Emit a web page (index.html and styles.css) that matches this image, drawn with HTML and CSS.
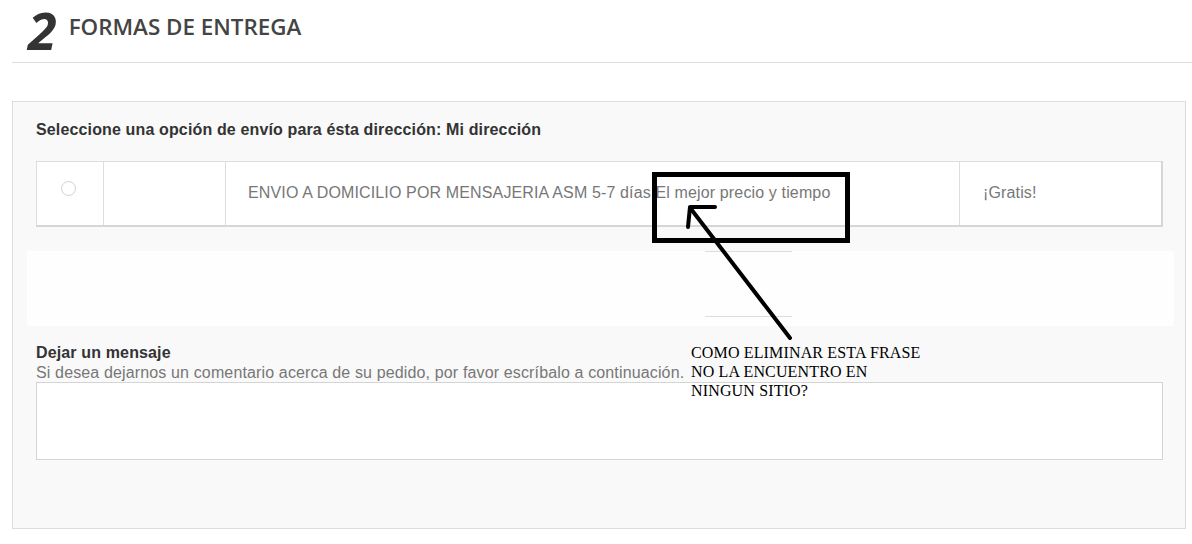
FILE: index.html
```html
<!DOCTYPE html>
<html lang="es">
<head>
    <meta charset="UTF-8">
    <meta name="viewport" content="width=device-width, initial-scale=1.0">
    <title>Formas de entrega</title>
    <link rel="stylesheet" href="styles.css">
</head>
<body>

    <div class="step-header">
        <span class="step-num">2</span>
        <h1 class="step-title">FORMAS DE ENTREGA</h1>
    </div>
    <hr class="step-rule">

    <div class="delivery-panel">
        <p class="delivery-label">Seleccione una opción de envío para ésta dirección: Mi dirección</p>

        <table class="carrier-table">
            <tr>
                <td class="col-radio"><span class="radio"></span></td>
                <td class="col-logo"></td>
                <td class="col-name">ENVIO A DOMICILIO POR MENSAJERIA ASM 5-7 días El mejor precio y tiempo</td>
                <td class="col-price">¡Gratis!</td>
            </tr>
        </table>

        <div class="extra-block">
            <div class="extra-line"></div>
        </div>

        <div class="message-box">
            <p class="message-title">Dejar un mensaje</p>
            <p class="message-hint">Si desea dejarnos un comentario acerca de su pedido, por favor escríbalo a continuación.</p>
            <textarea class="message-input"></textarea>
        </div>
    </div>

    <!-- anotacion encima de la captura -->
    <svg class="markup" width="1192" height="544" viewBox="0 0 1192 544">
        <rect x="654.5" y="174.5" width="193" height="66" fill="none" stroke="#000" stroke-width="5"/>
        <line x1="691" y1="209" x2="790" y2="338" stroke="#000" stroke-width="4" stroke-linecap="round"/>
        <polyline points="715,207 690,207 688,227" fill="none" stroke="#000" stroke-width="4" stroke-linecap="round" stroke-linejoin="round"/>
    </svg>
    <div class="markup-note">COMO ELIMINAR ESTA FRASE<br>NO LA ENCUENTRO EN<br>NINGUN SITIO?</div>

</body>
</html>
```

FILE: styles.css
```css
body {
    font-family: 'Liberation Sans', Arial, sans-serif;
    margin: 0;
    padding: 0;
    background-color: #fff;
    position: relative;
    width: 1192px;
    height: 544px;
    overflow: hidden;
}

.step-header {
    display: flex;
    align-items: flex-start;
    padding: 0 0 0 22px;
    height: 62px;
}

.step-num {
    font-family: 'Open Sans', sans-serif;
    font-style: italic;
    font-weight: 700;
    font-size: 52px;
    line-height: normal;
    margin-top: -6px;
    padding: 0 6px;
    color: #333;
    margin-right: 6px;
}

.step-title {
    font-family: 'Open Sans', sans-serif;
    font-weight: 600;
    font-size: 22.4px;
    color: #444;
    margin: 12px 0 0 0;
    line-height: 30px;
}

.step-rule {
    border: none;
    border-top: 1px solid #ddd;
    margin: 0 0 0 12px;
}

.delivery-panel {
    margin: 38px 6px 0 12px;
    border: 1px solid #ddd;
    background-color: #f9f9f9;
    padding: 19px 22px 69px 23px;
    height: 428px;
    box-sizing: border-box;
    letter-spacing: 0.14px;
}

.delivery-label {
    font-size: 16px;
    font-weight: bold;
    color: #333;
    margin: 0 0 22px 0;
    line-height: 18px;
}

.carrier-table {
    width: 100%;
    border-collapse: collapse;
    background-color: #fff;
    border-right: 2px solid #d6d6d6;
    border-bottom: 2px solid #d6d6d6;
}

.carrier-table td {
    border: 1px solid #ddd;
    height: 61px;
    padding: 0;
    font-size: 16px;
    color: #777;
}

.col-radio {
    width: 66px;
    text-align: center;
}

.col-logo {
    width: 121px;
}

.col-name {
    padding-left: 22px !important;
    padding-bottom: 2px !important;
}

.col-price {
    width: 178px;
    padding-left: 23px !important;
    padding-bottom: 2px !important;
}

.radio {
    display: inline-block;
    width: 13px;
    height: 13px;
    border: 1px solid #d2d2d2;
    border-radius: 50%;
    background-color: #fff;
    margin: -11px 4px 0 0;
    vertical-align: middle;
}

.extra-block {
    margin: 24px -11px 0 -9px;
    height: 75px;
    background-color: #fefefe;
    position: relative;
}

.extra-line {
    margin-left: 678px;
    width: 87px;
    height: 64px;
    border-top: 1px solid #ddd;
    border-bottom: 1px solid #ddd;
}

.message-box {
    margin-top: 18px;
}

.message-title {
    font-size: 16px;
    font-weight: bold;
    color: #333;
    margin: 0;
    line-height: 18px;
}

.message-hint {
    font-size: 16px;
    color: #777;
    margin: 2px 0 0 0;
    line-height: 18px;
}

.message-input {
    display: block;
    width: 100%;
    height: 78px;
    box-sizing: border-box;
    margin-top: 0;
    border: 1px solid #d4d4d4;
    background-color: #fff;
    resize: none;
}

.markup {
    position: absolute;
    top: 0;
    left: 0;
    pointer-events: none;
}

.markup-note {
    position: absolute;
    left: 691px;
    top: 343px;
    font-family: 'Liberation Serif', 'Times New Roman', serif;
    font-size: 16px;
    line-height: 19px;
    color: #000;
    letter-spacing: 0.15px;
}
```
